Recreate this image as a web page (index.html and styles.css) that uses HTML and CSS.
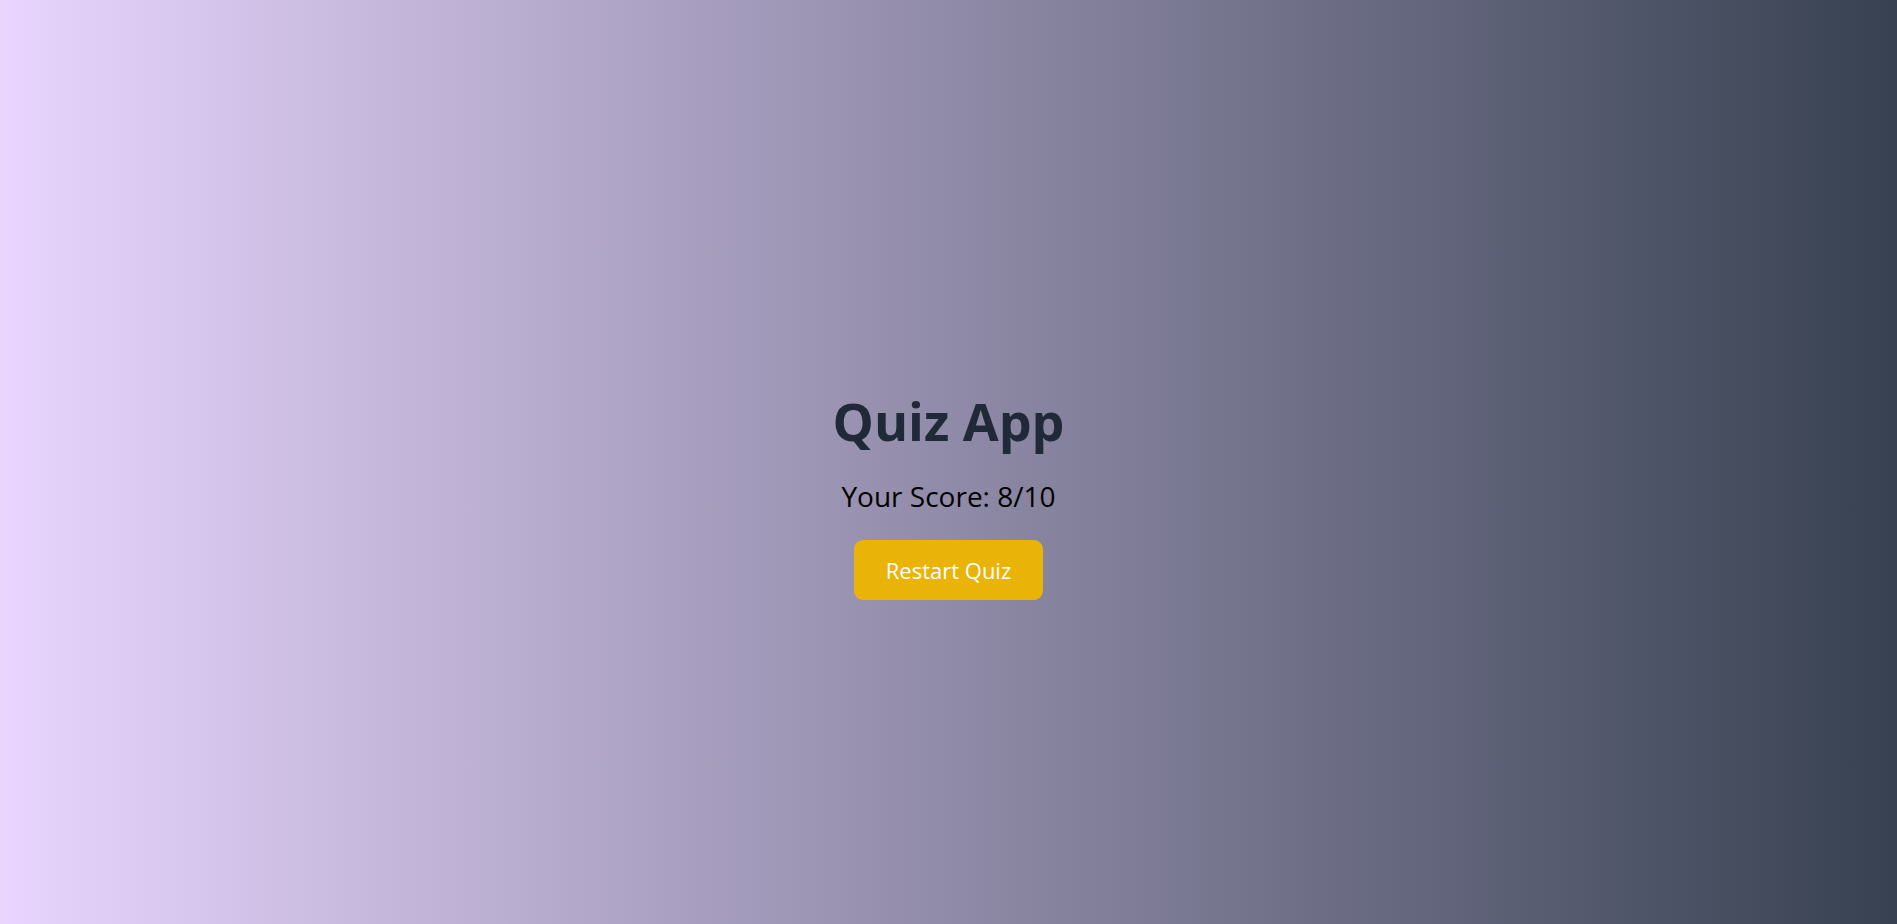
FILE: index.html
```html
<!DOCTYPE html>
<html lang="en">
<head>
<meta charset="utf-8">
<title>Quiz App</title>
<link rel="stylesheet" href="styles.css">
</head>
<body>
<main class="page">
  <div class="result">
    <h1 class="title">Quiz App</h1>
    <p class="score">Your Score: 8/10</p>
    <button class="restart" type="button">Restart Quiz</button>
  </div>
</main>
</body>
</html>
```
FILE: styles.css
```css
* { box-sizing: border-box; }
html, body { margin: 0; padding: 0; }
body {
  font-family: "Segoe UI", "Open Sans", "Noto Sans", sans-serif;
}
.page {
  min-height: 100vh;
  padding-top: 66px;
  display: flex;
  align-items: center;
  justify-content: center;
  background: linear-gradient(to right, #e9d5ff, #374151);
}
.result {
  display: flex;
  flex-direction: column;
  align-items: center;
}
.title {
  margin: 0 0 25px;
  font-size: 52px;
  line-height: 1.2;
  font-weight: 700;
  color: #1f2937;
}
.score {
  margin: 0 0 26px;
  font-size: 28px;
  line-height: 1.3;
  color: #000;
}
.restart {
  width: 189px;
  height: 60px;
  border: none;
  border-radius: 9px;
  background: #eab308;
  color: #fff;
  font-family: inherit;
  font-size: 22px;
  cursor: pointer;
}
```
